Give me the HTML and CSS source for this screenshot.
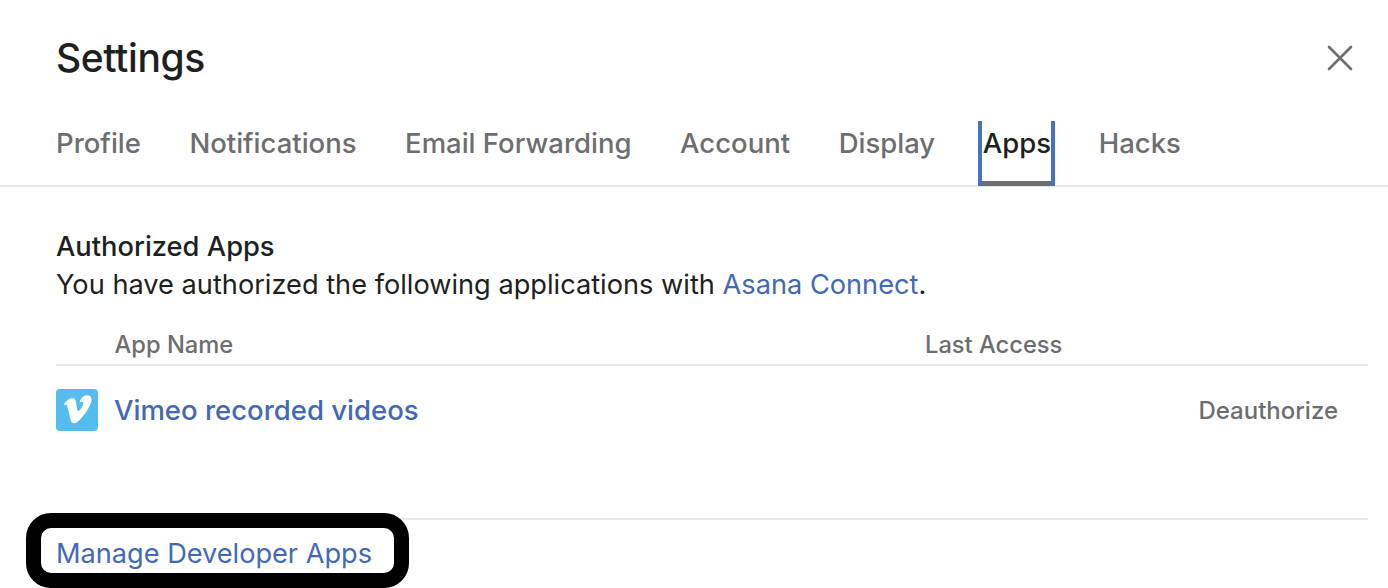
FILE: index.html
```html
<!DOCTYPE html>
<html lang="en">
<head>
    <meta charset="UTF-8">
    <title>Settings</title>
    <link rel="stylesheet" href="styles.css">
</head>
<body>
    <div class="header">
        <h1 class="title">Settings</h1>
        <svg class="close" width="26" height="26" viewBox="0 0 26 26">
            <path d="M2 2 L24 24 M24 2 L2 24" stroke="#6d6e6f" stroke-width="2.6" fill="none" stroke-linecap="round"/>
        </svg>
    </div>

    <div class="tabs">
        <a class="tab">Profile</a>
        <a class="tab">Notifications</a>
        <a class="tab">Email Forwarding</a>
        <a class="tab">Account</a>
        <a class="tab">Display</a>
        <a class="tab active">Apps</a>
        <a class="tab">Hacks</a>
    </div>

    <div class="content">
        <div class="section-title">Authorized Apps</div>
        <div class="section-text">You have authorized the following applications with <a class="link">Asana Connect</a>.</div>

        <div class="table-head">
            <span class="col-name">App Name</span>
            <span class="col-access">Last Access</span>
        </div>

        <div class="app-row">
            <svg class="app-icon" width="42" height="42" viewBox="0 0 42 42">
                <rect width="42" height="42" rx="4" fill="#54bdee"/>
                <path d="M8 15 C11 11.5 13.5 9 16.3 9 C19 9 19.8 11.5 20.3 15 C20.8 18.5 21.2 22 22.3 22 C24 22 27.6 16 27.2 13.8 C26.8 12.3 25 12.6 23.7 13.3 C25 8.5 28.5 6 31.8 6.3 C35 6.6 36 9.5 35.2 12.8 C34 18.5 26.5 29 21.3 33 C18 35.3 15.7 34.3 14.6 31 C13.4 27 12.4 20.5 11 16.3 C10.5 15.3 9.8 16 9 16.5 Z" fill="#fff"/>
            </svg>
            <a class="app-name">Vimeo recorded videos</a>
            <a class="deauth">Deauthorize</a>
        </div>

        <div class="footer">
            <a class="manage">Manage Developer Apps</a>
        </div>
    </div>
</body>
</html>
```

FILE: styles.css
```css
html, body {
    height: 588px;
    overflow: hidden;
}
body {
    margin: 0;
    background: #fff;
    font-family: Inter, "Noto Sans", sans-serif;
    color: #1e1f21;
}
a {
    text-decoration: none;
}

.header {
    display: flex;
    justify-content: space-between;
    align-items: center;
    padding: 36px 35px 0 56px;
}
.title {
    margin: 0;
    font-size: 39px;
    line-height: 44px;
    font-weight: 500;
    letter-spacing: -0.4px;
}

.tabs {
    display: flex;
    margin-top: 41px;
    padding-left: 56px;
    border-bottom: 2px solid #e8e8e9;
    height: 64px;
}
.tab {
    margin-right: 48.5px;
    font-size: 27.5px;
    line-height: 44px;
    font-weight: 500;
    color: #6d6e6f;
}
.tab.active {
    box-sizing: border-box;
    width: 77px;
    margin: 0 44px 0 -6px;
    padding: 0 0 0 1px;
    height: 65px;
    color: #1e1f21;
    border: solid #4573c4;
    border-width: 0 4px;
    box-shadow: inset 0 -5px 0 #6d6e6f;
}

.content {
    padding: 43px 20px 0 56px;
}
.section-title {
    font-size: 27.3px;
    line-height: 34px;
    font-weight: 500;
}
.section-text {
    margin-top: 2px;
    font-size: 27.2px;
    line-height: 38px;
}
.link, .app-name, .manage {
    color: #4169b8;
}

.table-head {
    display: flex;
    margin-top: 25px;
    padding: 0 0 3px 58.5px;
    height: 32px;
    line-height: 32px;
    font-size: 23.7px;
    font-weight: 500;
    color: #6d6e6f;
    border-bottom: 2px solid #e8e8e9;
}
.col-name {
    width: 810.5px;
}

.app-row {
    display: flex;
    align-items: center;
    margin-top: 23px;
    height: 42px;
    padding-right: 30px;
}
.app-icon {
    margin-right: 16px;
}
.app-name {
    font-size: 27.5px;
    font-weight: 500;
}
.deauth {
    margin-left: auto;
    font-size: 24px;
    font-weight: 500;
    color: #6d6e6f;
}

.footer {
    margin-top: 87px;
    border-top: 2px solid #e8e8e9;
}
.manage {
    display: inline-block;
    margin: -7px 0 0 -30px;
    padding: 0 15px;
    width: 323px;
    height: 45px;
    line-height: 51px;
    font-size: 27.15px;
    background: #fff;
    border: 15px solid #000;
    border-radius: 25px;
}
```
